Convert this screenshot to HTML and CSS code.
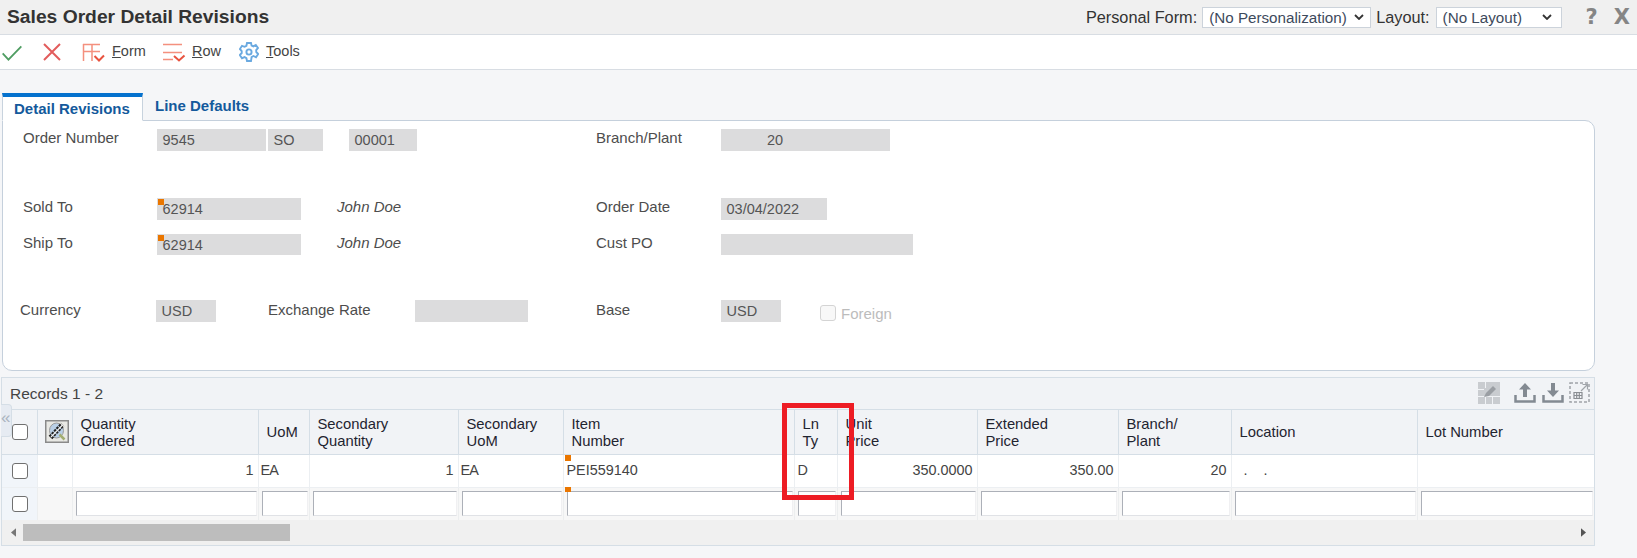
FILE: index.html
```html
<!DOCTYPE html>
<html lang="en">
<head>
<meta charset="utf-8">
<title>Sales Order Detail Revisions</title>
<link rel="stylesheet" href="styles.css">
</head>
<body>
<header class="titlebar">
  <h1 class="title">Sales Order Detail Revisions</h1>
  <div class="personal">
    <span>Personal Form:</span>
    <div class="select sel-form"><span>(No Personalization)</span><svg class="chev" viewBox="0 0 10 6"><path d="M1 1l4 4 4-4" /></svg></div>
    <span>Layout:</span>
    <div class="select sel-layout"><span>(No Layout)</span><svg class="chev" viewBox="0 0 10 6"><path d="M1 1l4 4 4-4" /></svg></div>
    <span class="winbtn help">?</span>
    <span class="winbtn close">X</span>
  </div>
</header>

<nav class="toolbar">
  <svg class="ic ic-check" viewBox="0 0 24 18"><path d="M1.500 9.500l6.500 7L22.500 1.500" /></svg>
  <svg class="ic ic-x" viewBox="0 0 18 18"><path d="M1 1l16 16M17 1L1 17" /></svg>
  <svg class="ic ic-form" viewBox="0 0 23 19"><path d="M1 1.500h17M1 8.500h17M1.500 1v17M10 1v17" /><path class="chv" d="M12.500 13l4.500 4.500 5-5" /></svg>
  <span class="tool-label"><u>F</u>orm</span>
  <svg class="ic ic-row" viewBox="0 0 23 19"><path d="M0 1.500h19M0 9.500h19M0 16.500h10" /><path class="chv" d="M11 13l5 4.500 5.500-5" /></svg>
  <span class="tool-label"><u>R</u>ow</span>
  <svg class="ic ic-gear" viewBox="0 0 20 20"><path d="M8 1h4l.6 2.600 1.800.8L16.800 3l2.200 3-1.800 2 .1 2 1.900 2-2.200 3.200-2.600-1.200-1.800 1L12 19H8l-.6-2.900-1.800-1L3 16.200.8 13l1.900-2v-2L.9 7 3 3.800l2.600 1 1.800-1z" /><circle cx="10" cy="10" r="2.600" /></svg>
  <span class="tool-label"><u>T</u>ools</span>
</nav>

<main class="content">
  <div class="tabs">
    <div class="tab active">Detail Revisions</div>
    <div class="tab">Line Defaults</div>
  </div>

  <section class="panel">
    <div class="row row1">
      <div class="left">
        <span class="lbl">Order Number</span>
        <span class="fld w-order">9545</span>
        <span class="fld w-type">SO</span>
        <span class="fld w-co">00001</span>
      </div>
      <div class="right">
        <span class="lbl-r">Branch/Plant</span>
        <span class="fld w-branch">20</span>
      </div>
    </div>
    <div class="row row2">
      <div class="left">
        <span class="lbl">Sold To</span>
        <span class="fld w-addr flagged">62914</span>
        <span class="name">John Doe</span>
      </div>
      <div class="right">
        <span class="lbl-r">Order Date</span>
        <span class="fld w-date">03/04/2022</span>
      </div>
    </div>
    <div class="row row3">
      <div class="left">
        <span class="lbl">Ship To</span>
        <span class="fld w-addr flagged">62914</span>
        <span class="name">John Doe</span>
      </div>
      <div class="right">
        <span class="lbl-r">Cust PO</span>
        <span class="fld w-po"></span>
      </div>
    </div>
    <div class="row row4">
      <div class="left tight">
        <span class="lbl lbl-cur">Currency</span>
        <span class="fld w-cur">USD</span>
        <span class="lbl-ex">Exchange Rate</span>
        <span class="fld w-rate"></span>
      </div>
      <div class="right">
        <span class="lbl-r">Base</span>
        <span class="fld w-base">USD</span>
        <span class="foreign"><span class="box box-off"></span>Foreign</span>
      </div>
    </div>
  </section>

  <section class="grid">
    <div class="grid-bar">
      <span class="records">Records 1 - 2</span>
      <div class="grid-tools">
        <svg class="gt gt-edit" viewBox="0 0 22 22"><path class="fill-l" d="M0 0h22v22H0z"/><path class="line-w" d="M0 14.500h22M7.500 14v8M14.500 14v8M0 7.500h6M7.500 0v6"/><path class="pen" d="M6 15l2-4 7-7 3 3-7 7z"/></svg>
        <svg class="gt gt-up" viewBox="0 0 22 20"><path class="solid" d="M11 0l6 6.500h-4V14H9V6.500H5z"/><path class="tray" d="M1.500 12v6.500h19V12"/></svg>
        <svg class="gt gt-down" viewBox="0 0 22 20"><path class="solid" d="M9 0h4v7.500h4L11 14 5 7.500h4z"/><path class="tray" d="M1.500 12v6.500h19V12"/></svg>
        <svg class="gt gt-exp" viewBox="0 0 21 21"><path class="dash" d="M1 1h19v19H1z"/><path class="arrow" d="M12 9l6-6M13.500 2.500h5v5"/><path class="tbl" d="M5 10.500h8v6H5zM5 13.500h8M7.700 10.500v6M10.300 10.500v6"/></svg>
      </div>
    </div>
    <div class="collapse">«</div>
    <table class="data">
      <colgroup>
        <col class="c-chk"><col class="c-ico"><col class="c-qty"><col class="c-uom"><col class="c-sq"><col class="c-su"><col class="c-item"><col class="c-ln"><col class="c-up"><col class="c-ep"><col class="c-bp"><col class="c-loc"><col class="c-lot">
      </colgroup>
      <thead>
        <tr>
          <th class="chk"><span class="box"></span></th>
          <th class="ico"><svg class="attach" viewBox="0 0 24 23"><path class="att-bg" d="M.75.75h22.500v21.500H.75z"/><ellipse class="att-lens" cx="11.500" cy="10.500" rx="7" ry="7.500"/><path class="att-pen" d="M5.500 17.500L17.500 4.500"/><path class="att-clip" d="M6 17L17.500 5"/><path class="att-tip" d="M14.500 14.500l5 5"/></svg></th>
          <th>Quantity<br>Ordered</th>
          <th>UoM</th>
          <th>Secondary<br>Quantity</th>
          <th>Secondary<br>UoM</th>
          <th>Item<br>Number</th>
          <th>Ln<br>Ty</th>
          <th>Unit<br>Price</th>
          <th>Extended<br>Price</th>
          <th>Branch/<br>Plant</th>
          <th>Location</th>
          <th>Lot Number</th>
        </tr>
      </thead>
      <tbody>
        <tr class="rec">
          <td class="chk"><span class="box"></span></td>
          <td></td>
          <td class="num">1</td>
          <td class="txt abbr">EA</td>
          <td class="num">1</td>
          <td class="txt abbr">EA</td>
          <td class="txt item"><span class="flag flag-top"></span>PEI559140<span class="flag flag-bot"></span></td>
          <td class="txt">D</td>
          <td class="num">350.0000</td>
          <td class="num">350.00</td>
          <td class="num">20</td>
          <td class="txt dots">.&nbsp;&nbsp;&nbsp;&nbsp;.</td>
          <td></td>
        </tr>
        <tr class="qbe">
          <td class="chk"><span class="box"></span></td>
          <td></td>
          <td><div class="inp"></div></td>
          <td><div class="inp"></div></td>
          <td><div class="inp"></div></td>
          <td><div class="inp"></div></td>
          <td><div class="inp"></div></td>
          <td><div class="inp"></div></td>
          <td><div class="inp"></div></td>
          <td><div class="inp"></div></td>
          <td><div class="inp"></div></td>
          <td><div class="inp"></div></td>
          <td><div class="inp"></div></td>
        </tr>
      </tbody>
    </table>
    <div class="scrollbar">
      <svg class="sb-arrow" viewBox="0 0 6 10"><path d="M6 0v10L0 5z"/></svg>
      <div class="thumb"></div>
      <svg class="sb-arrow sb-right" viewBox="0 0 6 10"><path d="M0 0v10l6-5z"/></svg>
    </div>
    <div class="callout"></div>
  </section>
</main>
</body>
</html>
```

FILE: styles.css
```css
* { box-sizing: border-box; }
html, body { margin: 0; padding: 0; }
body {
  width: 1637px;
  height: 558px;
  overflow: hidden;
  background: #f5f6f8;
  font-family: "Liberation Sans", Arial, sans-serif;
  color: #444;
}

/* Title bar */
.titlebar {
  height: 35px;
  background: #f0f0f0;
  border-bottom: 1px solid #d8dde3;
  display: flex;
  align-items: center;
  justify-content: space-between;
  padding: 0 7px 0 7px;
}
.title { margin: 0; font-size: 19.250px; font-weight: bold; color: #333; line-height: 30px; }
.personal { display: flex; align-items: center; font-size: 16.300px; color: #333; }
.select {
  height: 21px;
  background: #fff;
  border: 1px solid #ccd3db;
  display: flex;
  align-items: center;
  justify-content: space-between;
  font-size: 15.200px;
  color: #3d4a5c;
  padding: 0 6px 0 6px;
}
.sel-form { width: 169px; margin: 0 5px; }
.sel-layout { width: 126px; margin-left: 6px; padding-right: 9px; }
.chev { width: 10px; height: 6px; fill: none; stroke: #333; stroke-width: 1.800; }
.winbtn { font-family: "DejaVu Sans", sans-serif; font-weight: bold; font-size: 21px; color: #858585; }
.help { margin-left: 24px; }
.close { margin-left: 16px; }

/* Toolbar */
.toolbar {
  height: 35px;
  background: #fff;
  border-bottom: 1px solid #d8dde3;
  display: flex;
  align-items: center;
  padding-left: 1px;
}
.ic { flex: none; fill: none; }
.ic-check { width: 22px; height: 16px; stroke: #4f9d62; stroke-width: 2; margin-top: 1px; }
.ic-x { width: 18px; height: 18px; stroke: #e25c5c; stroke-width: 2; margin-left: 20px; }
.ic-form { width: 23px; height: 19px; stroke: #f4907e; stroke-width: 1.500; margin-left: 21px; }
.ic-row { width: 23px; height: 19px; stroke: #f4907e; stroke-width: 1.500; margin-left: 15px; }
.chv { stroke: #e8533f; stroke-width: 2; }
.ic-gear { width: 20px; height: 20px; stroke: #6aa9e0; stroke-width: 1.900; margin-left: 12px; }
.tool-label { font-size: 14.500px; color: #444; margin-left: 7px; width: 44px; margin-top: -3px; }
.ic-form + .tool-label { width: 36px; margin-left: 7px; }
.ic-row + .tool-label { width: 35px; margin-left: 6px; }
.ic-gear + .tool-label { width: 40px; margin-left: 7px; }

/* Tabs */
.content { padding: 23px 42px 0 2px; }
.tabs { display: flex; height: 28px; position: relative; z-index: 1; margin-bottom: -1px; }
.tab {
  font-size: 15px;
  font-weight: bold;
  color: #145a9c;
  padding: 3px 0 0 12px;
  width: 141px;
  line-height: 20px;
}
.tab.active {
  background: #fff;
  border: 1px solid #c8d3de;
  border-top: 4px solid #0572ce;
  border-bottom-color: #fff;
  padding: 2px 0 0 11px;
}

/* Form panel */
.panel {
  height: 251px;
  background: #fff;
  border: 1px solid #c5d0dc;
  border-radius: 0 10px 10px 10px;
  padding-top: 8px;
}
.row { display: flex; font-size: 15px; }
.row2 { margin-top: 47px; }
.row3 { margin-top: 14px; }
.row4 { margin-top: 45px; }
.row4 .lbl, .row4 .lbl-r, .row4 .lbl-ex { padding-top: 1px; }
.left { display: flex; width: 593px; padding-left: 20px; }
.left.tight { padding-left: 17px; }
.right { display: flex; }
.lbl { width: 134px; line-height: 18px; color: #4d4d4d; }
.lbl-cur { width: 136px; }
.lbl-r { width: 125px; line-height: 18px; color: #4d4d4d; }
.lbl-ex { width: 146px; margin-left: 52px; line-height: 18px; color: #4d4d4d; }
.fld {
  display: block;
  position: relative;
  height: 22px;
  line-height: 23px;
  background: #dcdcdd;
  font-size: 14.500px;
  color: #555;
  padding-left: 5.500px;
}
.w-order { width: 109px; }
.w-type { width: 55px; margin-left: 2px; }
.w-co { width: 68px; margin-left: 26px; }
.w-branch { width: 169px; padding-left: 46px; }
.w-addr { width: 144px; }
.w-date { width: 106px; }
.w-po { width: 192px; height: 21px; }
.row3 .w-addr { height: 21px; }
.w-cur { width: 60px; }
.w-rate { width: 113px; margin-left: 1px; }
.w-base { width: 60px; }
.flagged::before {
  content: "";
  position: absolute;
  left: 1px;
  top: 1px;
  width: 6px;
  height: 6px;
  background: #ea7600;
}
.name { margin-left: 36px; font-style: italic; font-size: 15px; line-height: 18px; color: #4d4d4d; }
.foreign {
  display: flex;
  align-items: center;
  gap: 5px;
  margin: 4px 0 0 39px;
  height: 18px;
  font-size: 15px;
  color: #bcbcbc;
}

/* Checkbox */
.box {
  display: block;
  width: 16px;
  height: 16px;
  background: #fff;
  border: 1.500px solid #707070;
  border-radius: 3px;
}
.box-off { background: #f8f8f8; border-color: #d4d4d4; }

/* Grid */
.grid {
  position: relative;
  width: 1594px;
  margin: 6px 0 0 -1px;
  border: 1px solid #d5dee6;
  background: #f1f3f6;
}
.grid-bar {
  height: 32px;
  display: flex;
  align-items: center;
  justify-content: space-between;
  padding: 0 4px 0 8px;
  border-bottom: 1px solid #d5dee6;
}
.records { font-size: 15.500px; color: #444; margin-top: 1px; }
.grid-tools { display: flex; align-items: center; margin-top: -2px; }
.gt { flex: none; }
.gt-edit { width: 22px; height: 22px; margin-right: 14px; }
.gt-up { width: 22px; height: 20px; margin-right: 6px; }
.gt-down { width: 22px; height: 20px; margin-right: 5px; }
.gt-exp { width: 21px; height: 21px; }
.fill-l { fill: #c9ccd0; }
.line-w { fill: none; stroke: #f1f3f6; stroke-width: 1; }
.pen { fill: #9a9ea3; }
.solid { fill: #838a92; }
.tray { fill: none; stroke: #838a92; stroke-width: 2.500; }
.dash { fill: none; stroke: #a0a4a9; stroke-width: 1.500; stroke-dasharray: 3 2; }
.arrow { fill: none; stroke: #a0a4a9; stroke-width: 1.200; }
.tbl { fill: none; stroke: #8a8e93; stroke-width: 1.200; }

.collapse {
  position: absolute;
  left: -1px;
  top: 26px;
  width: 11px;
  height: 33px;
  background: #e6ebf2;
  border: 1px solid #d5dee6;
  border-left: 0;
  border-radius: 0 4px 4px 0;
  font-size: 17px;
  line-height: 25px;
  color: #aab4c0;
}

.data {
  width: 1592px;
  table-layout: fixed;
  border-collapse: collapse;
  font-size: 14.400px;
  color: #444;
}
.c-chk { width: 35px; }
.c-ico { width: 35px; }
.c-qty { width: 186px; }
.c-uom { width: 51px; }
.c-sq { width: 149px; }
.c-su { width: 105px; }
.c-item { width: 231px; }
.c-ln { width: 43px; }
.c-up { width: 140px; }
.c-ep { width: 141px; }
.c-bp { width: 113px; }
.c-loc { width: 186px; }
.c-lot { width: 177px; }

.data th {
  height: 44px;
  padding: 2px 0 0 8px;
  text-align: left;
  font-weight: normal;
  font-size: 14.800px;
  line-height: 17px;
  color: #1f2430;
  background: #f1f3f6;
  border-right: 1px solid #d5dee6;
  border-bottom: 1px solid #d5dee6;
}
.data th:last-child { border-right: 0; }
.data th.chk, .data th.ico { padding: 0; }
.data td { padding: 0 0 2px; border-right: 1px solid #eceff2; border-bottom: 1px solid #eceff2; }
.data td:last-child { border-right: 0; }
.chk .box { margin-left: 10px; }
.data td.chk { background: #f1f5fa; padding: 0; }
.attach { display: block; width: 24px; height: 23px; margin: 0 0 0 7px; }
.att-bg { fill: #e8e8e4; stroke: #8a8a8a; stroke-width: 1.500; }
.att-lens { fill: #b9cfe6; stroke: #9a9a9a; stroke-width: 1; }
.att-pen { stroke: #222; stroke-width: 5; stroke-dasharray: 2.500 1; }
.att-clip { stroke: #f2f2f2; stroke-width: 1.200; }
.att-tip { stroke: #a2ad70; stroke-width: 2.500; }

.rec td { height: 33px; background: #fff; }
.rec td.chk { background: #f1f5fa; }
.qbe td { height: 33px; background: #f7f7f7; border-bottom: 0; border-right-color: #eceeef; padding: 0; }
.qbe td.chk { background: #f1f5fa; }
.data td.num { text-align: right; padding-right: 4px; }
.data td.txt { padding-left: 3px; }
.data td.abbr { letter-spacing: -.8px; padding-left: 2px; }
.item { position: relative; }
.data td.dots { padding-left: 12px; }
.flag { position: absolute; left: 1px; width: 6px; height: 5px; background: #ea7600; }
.flag-top { top: 0; height: 6px; }
.flag-bot { bottom: -5px; z-index: 1; }
.inp {
  height: 25px;
  margin: 0 1px 0 3px;
  background: #fff;
  border: 1px solid #e0e2e6;
  border-top-color: #acb0b8;
  border-left-color: #acb0b8;
  border-right-color: #f0f0f2;
}

.scrollbar {
  height: 25px;
  background: #f0f0f0;
  display: flex;
  align-items: center;
  padding: 0 8px 0 9px;
}
.sb-arrow { flex: none; width: 5px; height: 9px; fill: #777; }
.sb-right { width: 5px; fill: #555; margin-left: auto; }
.thumb { width: 267px; height: 17px; background: #bdbdbd; margin-left: 7px; }

.callout {
  position: absolute;
  left: 780px;
  top: 25px;
  width: 72px;
  height: 97px;
  border: 5px solid #ed1c24;
  pointer-events: none;
}
```
